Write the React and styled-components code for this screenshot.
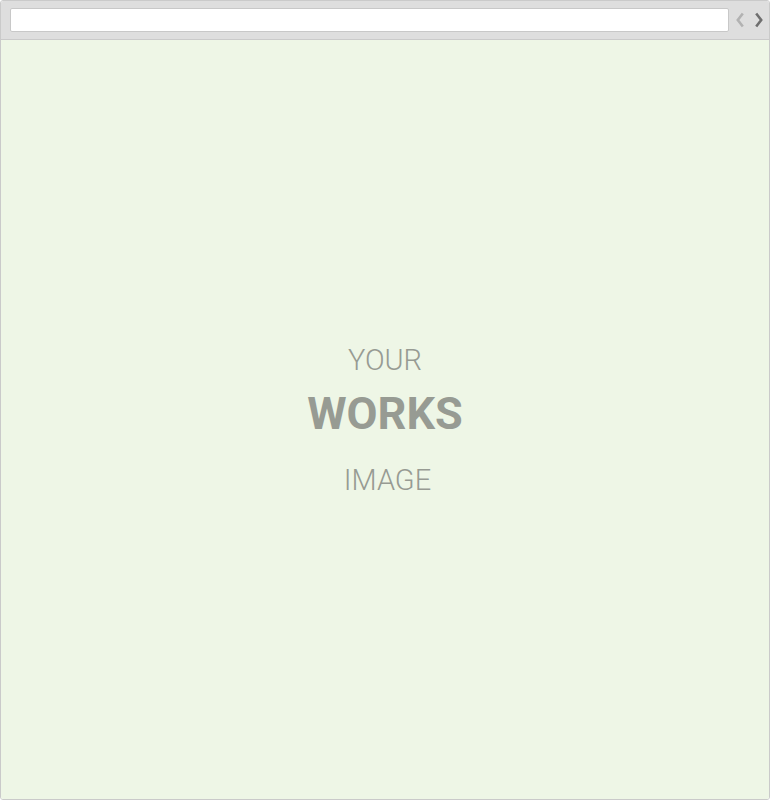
import React from "react";
import styled, { createGlobalStyle } from "styled-components";

const GlobalStyle = createGlobalStyle`
  html, body {
    margin: 0;
    padding: 0;
    background: #ffffff;
  }
  body {
    font-family: Roboto, "Liberation Sans", sans-serif;
  }
`;

const App = () => {
  return (
    <>
      <GlobalStyle />
      <BrowserFrame>
        <Toolbar>
          <AddressBar />
          <NavButtons>
            <Chevron viewBox="0 0 8 16" $color="#b2b2b2">
              <polyline points="6.8,1.5 1.8,8 6.8,14.5" />
            </Chevron>
            <Chevron viewBox="0 0 8 16" $color="#6f6f6f">
              <polyline points="1.2,1.5 6.2,8 1.2,14.5" />
            </Chevron>
          </NavButtons>
        </Toolbar>
        <Screen>
          <Placeholder>
            <Line>YOUR</Line>
            <BigLine>WORKS</BigLine>
            <Line $indent={5}>IMAGE</Line>
          </Placeholder>
        </Screen>
      </BrowserFrame>
    </>
  );
};
export default App;

const BrowserFrame = styled.div`
  width: 770px;
  height: 800px;
  box-sizing: border-box;
  border: 1px solid #cacaca;
  border-radius: 3px;
  overflow: hidden;
  display: flex;
  flex-direction: column;
`;

const Toolbar = styled.div`
  height: 38px;
  flex-shrink: 0;
  background: #dedede;
  border-bottom: 1px solid #cacaca;
  display: flex;
  align-items: center;
  padding: 0 6px 0 9px;
`;

const AddressBar = styled.div`
  flex: 1;
  height: 22px;
  background: #ffffff;
  border: 1px solid #c8c8c8;
  border-radius: 2px;
`;

const NavButtons = styled.div`
  display: flex;
  align-items: center;
  gap: 11px;
  margin-left: 7px;
`;

const Chevron = styled.svg`
  width: 8px;
  height: 16px;
  fill: none;
  stroke: ${props => props.$color};
  stroke-width: 2.6;
`;

const Screen = styled.div`
  flex: 1;
  background: #eef6e6;
  display: flex;
  align-items: center;
  justify-content: center;
`;

const Placeholder = styled.div`
  display: flex;
  flex-direction: column;
  align-items: center;
  color: #979b93;
  text-transform: uppercase;
`;

const Line = styled.div`
  font-size: 29px;
  font-weight: 300;
  line-height: 36px;
  padding-left: ${props => props.$indent || 0}px;
`;

const BigLine = styled.div`
  font-size: 45px;
  font-weight: 700;
  line-height: 48px;
  margin: 12px 0 24px;
`;
